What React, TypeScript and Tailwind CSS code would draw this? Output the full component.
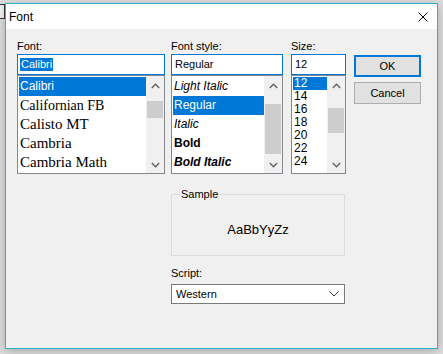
import React from "react";

const Chevron = ({ up }: { up?: boolean }) => (
  <svg width="9" height="6" viewBox="0 0 9 6">
    <polyline
      points={up ? "0.8,5 4.5,1.2 8.2,5" : "0.8,1 4.5,4.8 8.2,1"}
      fill="none"
      stroke="#606060"
      strokeWidth="1.3"
    />
  </svg>
);

const ScrollBar = ({ thumb }: { thumb: string }) => (
  <div className="w-[18px] bg-[#f0f0f0] flex flex-col">
    <div className="h-[17px] flex items-center justify-center pt-[3px]">
      <Chevron up />
    </div>
    <div className="flex-1">
      <div className={"mx-[1px] bg-[#cdcdcd] " + thumb} />
    </div>
    <div className="h-[17px] flex items-center justify-center pt-[1px]">
      <Chevron />
    </div>
  </div>
);

type Item = { label: string; cls: string; sel?: boolean };

const ListBox = ({
  items,
  thumb,
}: {
  items: Item[];
  thumb: string;
}) => (
  <div className="h-[99px] border border-[#828790] bg-white flex">
    <div className="flex-1 pl-[1px] py-[1px] overflow-hidden">
      {items.map((it, idx) => (
        <div
          key={idx}
          className={
            "pl-[1px] whitespace-nowrap " +
            it.cls +
            (it.sel ? " bg-[#0078d7] text-white" : " text-black")
          }
        >
          {it.label}
        </div>
      ))}
    </div>
    <ScrollBar thumb={thumb} />
  </div>
);

const Field = ({ children }: { children: React.ReactNode }) => (
  <div className="h-[21px] border border-[#0078d7] bg-white flex items-center pl-[2px] text-[11px]">
    {children}
  </div>
);

const Label = ({ text }: { text: string }) => (
  <div className="h-[14px] text-[11px] leading-[13px] text-black">{text}</div>
);

const fontItems: Item[] = [
  { label: "Calibri", cls: "h-[19px] leading-[19px] text-[12px]", sel: true },
  { label: "Californian FB", cls: "h-[19px] leading-[19px] text-[14px] font-['Liberation_Serif',serif]" },
  { label: "Calisto MT", cls: "h-[19px] leading-[19px] text-[15px] font-['Liberation_Serif',serif]" },
  { label: "Cambria", cls: "h-[19px] leading-[19px] text-[15px] font-['Liberation_Serif',serif]" },
  { label: "Cambria Math", cls: "h-[19px] leading-[19px] text-[15px] font-['Liberation_Serif',serif]" },
];

const styleItems: Item[] = [
  { label: "Light Italic", cls: "h-[19px] leading-[19px] text-[12px] italic" },
  { label: "Regular", cls: "h-[19px] leading-[19px] text-[12px]", sel: true },
  { label: "Italic", cls: "h-[19px] leading-[19px] text-[12px] italic" },
  { label: "Bold", cls: "h-[19px] leading-[19px] text-[12px] font-bold" },
  { label: "Bold Italic", cls: "h-[19px] leading-[19px] text-[12px] font-bold italic" },
];

const sizeItems: Item[] = ["12", "14", "16", "18", "20", "22", "24"].map(
  (s, idx) => ({
    label: s,
    cls: "h-[13px] leading-[13px] text-[12px]",
    sel: idx === 0,
  })
);

const App = () => {
  return (
    <div className="w-[443px] h-[354px] bg-[#dedede] flex overflow-hidden font-['Liberation_Sans',Arial,sans-serif]">
      <div className="w-[5px] overflow-hidden pt-[4px]">
        <div className="ml-[-10px] w-[15px] h-[15px] border border-[#333] bg-[#f4f4f4]" />
      </div>
      <div className="mt-[3px] w-[433px] h-[346px] border border-[#26b6cb] flex flex-col shadow-[0_2px_10px_rgba(0,0,0,0.25)]">
        <div className="h-[25px] bg-white flex items-center justify-between pl-[3px] pr-[9px]">
          <span className="text-[12px] text-black">Font</span>
          <svg width="10" height="10" viewBox="0 0 10 10">
            <path d="M0.5 0.5 L9.5 9.5 M9.5 0.5 L0.5 9.5" stroke="#000" strokeWidth="1" />
          </svg>
        </div>
        <div className="flex-1 bg-[#f0f0f0] pl-[11px] pt-[11px]">
          <div className="flex">
            <div className="w-[148px]">
              <Label text="Font:" />
              <Field>
                <span className="bg-[#0078d7] text-white leading-[13px] px-[1px]">Calibri</span>
              </Field>
              <ListBox items={fontItems} thumb="mt-[8px] h-[17px]" />
            </div>
            <div className="w-[112px] ml-[6px]">
              <Label text="Font style:" />
              <Field>
                <span className="pl-[1px]">Regular</span>
              </Field>
              <ListBox items={styleItems} thumb="mt-[11px] h-[50px]" />
            </div>
            <div className="w-[55px] ml-[8px]">
              <Label text="Size:" />
              <Field>
                <span className="pl-[1px]">12</span>
              </Field>
              <ListBox items={sizeItems} thumb="mt-[15px] h-[25px]" />
            </div>
            <div className="w-[67px] ml-[8px] pt-[15px] flex flex-col gap-[5px]">
              <div className="h-[22px] border-2 border-[#0078d7] bg-[#e1e1e1] flex items-center justify-center text-[11px] text-black">
                OK
              </div>
              <div className="h-[22px] border border-[#adadad] bg-[#e1e1e1] flex items-center justify-center text-[11px] text-black">
                Cancel
              </div>
            </div>
          </div>
          <div className="ml-[154px] w-[174px] mt-[20px]">
            <div className="h-[62px] border border-[#dcdcdc] flex flex-col">
              <div className="-mt-[7px] ml-[8px] w-fit bg-[#f0f0f0] px-[1px] text-[11px] leading-[13px] text-black">
                Sample
              </div>
              <div className="mt-[21px] text-center text-[13px] leading-[16px] text-black">
                AaBbYyZz
              </div>
            </div>
            <div className="mt-[11px]">
              <Label text="Script:" />
            </div>
            <div className="mt-[3px] h-[20px] border border-[#7a7a7a] bg-white flex items-center justify-between pl-[4px] pr-[5px] text-[11px] text-black">
              <span>Western</span>
              <svg width="10" height="6" viewBox="0 0 10 6">
                <polyline points="0.5,0.5 5,5 9.5,0.5" fill="none" stroke="#333" strokeWidth="1" />
              </svg>
            </div>
          </div>
        </div>
      </div>
    </div>
  );
};

export default App;
